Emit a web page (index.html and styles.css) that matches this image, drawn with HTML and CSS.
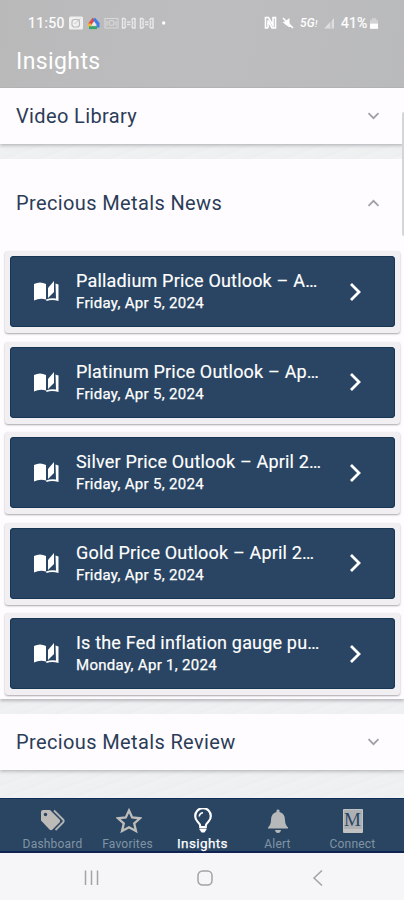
FILE: index.html
```html
<!DOCTYPE html>
<html lang="en">
<head>
<meta charset="utf-8">
<title>Insights</title>
<link rel="stylesheet" href="styles.css">
</head>
<body>
<svg class="defs" width="0" height="0">
  <symbol id="book" viewBox="0 0 25 21"><path d="M0 3Q6 0 12 3V18.500Q6 16.500 0 19.500Z"/><path d="M14 7L20 0V11L14 17Z"/><path d="M21.500 2.500L24.500 3.500V20Q18 18 12.500 20L12 18.500Q17 16.500 22 17.500Z"/></symbol>
  <symbol id="next" viewBox="0 0 12 20"><path d="M2 2L10 10L2 18"/></symbol>
  <symbol id="down" viewBox="0 0 12 8"><path d="M1 1.200L6 6.200L11 1.200"/></symbol>
</svg>
<header class="header">
  <div class="status">
    <span class="clock">11:50</span>
    <svg class="s-left" width="100" height="16" viewBox="0 0 100 16" fill="none">
      <rect x="1" y="1.500" width="14" height="13" rx="1.500" fill="#f0f0f0"/><rect x="4" y="4.500" width="7.500" height="7.500" rx="2.500" stroke="#bbb" stroke-width="1.200"/><path d="M6.500 9L9 6.500L12.500 3.500" stroke="#c2c2c2"/>
      <path d="M21.500 9.500L26 3.800" stroke="#e14b3f" stroke-width="3.200"/><path d="M26 3.800L30 8.500V12.500" stroke="#3c7de8" stroke-width="3"/><path d="M21.500 8.500V12" stroke="#f3b92d" stroke-width="3"/><path d="M21 12.700H29" stroke="#34a56b" stroke-width="2.800"/><path d="M23 10.800L26 6.500L28.500 10.800Z" fill="#eee"/>
      <g stroke="#d8d8d8" stroke-width="1.100"><rect x="37" y="3.500" width="13" height="9.500"/><circle cx="43.500" cy="8" r="2.500"/><path d="M39 6V11M48 6V11"/></g>
      <g stroke="#e8e8e8" stroke-width="1.500"><path d="M58 5.500L56.500 3.500H54.500V13H56.500L58 11M63.500 5.500L65 3.500H67V13H65L63.500 11M57 6V10.500M64.500 6V10.500M59 7H62.500M59 9.500H62.500"/><path d="M76 5.500L74.500 3.500H72.500V13H74.500L76 11M81.500 5.500L83 3.500H85V13H83L81.500 11M75 6V10.500M82.500 6V10.500M77 7H80.500M77 9.500H80.500"/></g>
      <circle cx="95.700" cy="8" r="1.700" fill="#fff"/>
    </svg>
    <svg class="s-right" width="76" height="16" viewBox="0 0 76 16" fill="none" stroke="#fff">
      <path d="M4 13H1.500V2.500H4.500L9 10.500V2.500H11.500V13H8L4 5.500V13" stroke-width="1.600"/>
      <path d="M18.500 7L21 6.500L25.500 3V9L28 12H25L22 10Z" fill="#fff" stroke="none"/><path d="M19 3L29 13" stroke-width="1.500"/>
      <path d="M60 13.500H70V3Z" fill="#e5e5e5" stroke="none" opacity=".8"/><path d="M67 13V4.500" stroke="#aaa" stroke-width=".8"/>
    </svg>
    <span class="fiveg">5G<sub>!</sub></span>
    <span class="pct">41%</span>
    <svg class="battery" width="8" height="11" viewBox="0 0 9 12"><path d="M2 0H7V2H9V6H0V2H2Z" fill="#d2d2d2"/><path d="M0 6H9V12H0Z" fill="#fff"/></svg>
  </div>
  <h1>Insights</h1>
</header>
<main class="content">
  <section class="panel"><h2>Video Library</h2><svg class="chev"><use href="#down"/></svg></section>
  <section class="news">
    <div class="news-head"><h2>Precious Metals News</h2><svg class="chev up"><use href="#down"/></svg></div>
    <div class="list">
      <article class="frame"><div class="card"><svg class="book"><use href="#book"/></svg><div class="txt"><h3>Palladium Price Outlook – A…</h3><p>Friday, Apr 5, 2024</p></div><svg class="next"><use href="#next"/></svg></div></article>
      <article class="frame"><div class="card"><svg class="book"><use href="#book"/></svg><div class="txt"><h3>Platinum Price Outlook – Ap…</h3><p>Friday, Apr 5, 2024</p></div><svg class="next"><use href="#next"/></svg></div></article>
      <article class="frame"><div class="card"><svg class="book"><use href="#book"/></svg><div class="txt"><h3>Silver Price Outlook – April 2…</h3><p>Friday, Apr 5, 2024</p></div><svg class="next"><use href="#next"/></svg></div></article>
      <article class="frame"><div class="card"><svg class="book"><use href="#book"/></svg><div class="txt"><h3>Gold Price Outlook – April 2…</h3><p>Friday, Apr 5, 2024</p></div><svg class="next"><use href="#next"/></svg></div></article>
      <article class="frame"><div class="card"><svg class="book"><use href="#book"/></svg><div class="txt"><h3>Is the Fed inflation gauge pu…</h3><p>Monday, Apr 1, 2024</p></div><svg class="next"><use href="#next"/></svg></div></article>
    </div>
  </section>
  <section class="panel"><h2>Precious Metals Review</h2><svg class="chev"><use href="#down"/></svg></section>
  <div class="scrollbar"></div>
</main>
<nav class="tabs">
  <a><svg viewBox="0 0 26 26"><path d="M1 4Q1 2 3 2H10L19.500 11.500Q21 13 19.500 14.500L12.500 21.500Q11 23 9.500 21.500L1 12.500Z" fill="#bdbbb8"/><circle cx="5.500" cy="6.500" r="1.700" fill="#294562"/><path d="M14 2.500L23 11.500Q24.500 13 23 14.500L15.500 22" fill="none" stroke="#b3b3b3" stroke-width="1.800"/></svg><span>Dashboard</span></a>
  <a><svg class="star" viewBox="0 0 26 26"><path d="M13 2.500L16.200 9.500L24 10.300L18.200 15.500L20 23L13 19.200L6 23L7.800 15.500L2 10.300L9.800 9.500Z" fill="none" stroke="#bebcb9" stroke-width="2.300"/></svg><span>Favorites</span></a>
  <a class="active"><svg viewBox="0 0 26 26" fill="none" stroke="#fff" stroke-width="2.200"><path d="M10.300 19Q10.300 16 7.500 13.500A7.800 7.800 0 1 1 18.500 13.500Q15.700 16 15.700 19Z"/><path d="M9.300 8.500A3.700 3.700 0 0 1 13 4.800" stroke-width="1.500"/><path d="M9.500 20.500H16.500V21.500L14.500 24.500H11.500L9.500 21.500Z" fill="#fff" stroke="none"/></svg><span>Insights</span></a>
  <a><svg viewBox="0 0 26 26" fill="#b7b8b9"><path d="M3 19.500Q6 17 6 12Q6 5.500 11.500 4V2.800Q11.500 1.500 13 1.500T14.500 2.800V4Q20 5.500 20 12Q20 17 23 19.500V20.500H3ZM10 22H16Q15.500 25 13 25T10 22Z"/></svg><span>Alert</span></a>
  <a><i class="mbook">M</i><span>Connect</span></a>
</nav>
<footer class="system">
  <svg width="16" height="16" viewBox="0 0 16 16"><path d="M1.500 .5V15M7.500 .5V15M13.500 .5V15"/></svg>
  <svg width="16" height="16" viewBox="0 0 16 16"><rect x="1" y="1" width="14" height="14" rx="4.500"/></svg>
  <svg width="16" height="16" viewBox="0 0 16 16"><path d="M12 .5L4 8L12 15.500"/></svg>
</footer>
</body>
</html>
```
FILE: styles.css
```css
* { box-sizing: border-box; }
body { margin: 0; width: 404px; height: 900px; overflow: hidden; display: flex; flex-direction: column; font-family: Roboto, "Liberation Sans", sans-serif; background: #eff0f1; }
h1, h2, h3, p { margin: 0; font-weight: 400; white-space: nowrap; }
.defs { position: absolute; }
.header { height: 88px; flex: none; color: #fff; background: linear-gradient(100deg, #b9b9ba, #bdbdbf 50%, #b9babc); border-bottom: 1px solid #b2b2b4; }
.status { height: 46px; padding: 0 25px 0 28px; display: flex; align-items: center; }
.clock { width: 40px; font-size: 14px; letter-spacing: .4px; -webkit-text-stroke: .2px #fff; }
.s-left { margin-right: 96px; flex: none; }
.s-right { flex: none; margin-right: -40px; }
.fiveg { width: 32px; font-size: 12px; line-height: 16px; font-weight: 500; font-style: italic; letter-spacing: .2px; }
.fiveg sub { font-size: 9px; line-height: 8px; vertical-align: baseline; }
.pct { width: 27px; margin-left: 9px; font-size: 14px; letter-spacing: .1px; -webkit-text-stroke: .2px #fff; }
.battery { flex: none; margin-left: 2px; }
h1 { padding-left: 16px; font-size: 23px; line-height: 31px; letter-spacing: .4px; }
.content { position: relative; flex: none; height: 710px; display: flex; flex-direction: column; gap: 15px; background: repeating-linear-gradient(160deg, #eff0f1 0 5px, #edeeef 7px, #f0f1f2 9px 12px); }
.panel { height: 56px; flex: none; padding: 0 24px 0 16px; display: flex; align-items: center; justify-content: space-between; background: #fefcff; box-shadow: 0 1px 4px #77778099; clip-path: inset(0 0 -8px); }
.news { height: 540px; flex: none; background: #fefcff; box-shadow: 0 2px 3px #77778077; clip-path: inset(0 0 -8px); }
.news-head { height: 88px; padding: 0 24px 0 16px; display: flex; align-items: center; justify-content: space-between; }
h2 { font-size: 20px; color: #2c3c57; letter-spacing: .37px; }
.chev { width: 13px; height: 8px; fill: none; stroke: #a0a0a5; stroke-width: 1.8; }
.up { transform: rotate(180deg); }
.list { padding: 4px 4px 0 5px; display: flex; flex-direction: column; gap: 8.5px; }
.frame { height: 82px; padding: 5px 5px 7px; background: #f2eff3; border-radius: 3px; box-shadow: 0 1px 2px #aaa5ac; }
.card { height: 71px; display: flex; align-items: center; padding: 0 34px 0 24px; background: #294563; border-radius: 4px; box-shadow: inset 0 0 0 1px #173654; color: #fff; }
.book { width: 25px; height: 21px; fill: #fff; flex: none; }
.txt { width: 250px; margin-left: 17px; }
h3 { font-size: 18px; line-height: 23px; letter-spacing: .18px; -webkit-text-stroke: .15px #fff; }
.txt p { font-size: 15px; line-height: 22px; letter-spacing: .3px; -webkit-text-stroke: .25px #fff; }
.next { width: 12px; height: 20px; margin-left: auto; flex: none; fill: none; stroke: #fff; stroke-width: 2.8; }
.scrollbar { position: absolute; right: 0; top: 24px; width: 2px; height: 124px; background: #d5d5d8; border-radius: 2px 0 0 2px; }
.tabs { height: 55px; flex: none; padding: 9px 14px 0 15px; display: grid; grid-template-columns: repeat(5, 1fr); background: #294562; border-top: 1px solid #102f58; border-bottom: 2px solid #102453; }
.tabs a { display: flex; flex-direction: column; align-items: center; color: #8194a5; font-size: 12px; }
.tabs svg { width: 26px; height: 26px; }
.star { position: relative; left: 1px; }
.tabs span { line-height: 18px; margin-top: 1px; letter-spacing: .2px; white-space: nowrap; }
.tabs .active { color: #fff; font-size: 13.5px; }
.tabs .active span { margin-top: 0; letter-spacing: .4px; -webkit-text-stroke: .25px #fff; }
.mbook { width: 20px; height: 24px; margin: 1px 0; border: 1px solid #c2c2c2; border-bottom-width: 4px; background: #aeb1b3; color: #294562; font: 19px/20px "Liberation Serif", serif; border-radius: 1px; display: flex; justify-content: center; }
.system { height: 47px; flex: none; padding: 3px 78px 0 84px; display: flex; align-items: center; justify-content: space-between; background: #f6f6f9; }
.system svg { fill: none; stroke: #a3a3a7; stroke-width: 1.5; }
```
